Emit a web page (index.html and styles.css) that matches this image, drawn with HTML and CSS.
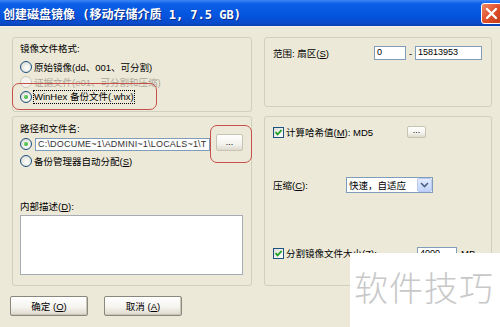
FILE: index.html
```html
<!DOCTYPE html>
<html lang="zh-CN">

<head>
    <meta charset="UTF-8">
    <meta name="viewport" content="width=device-width, initial-scale=1.0">
    <title>创建磁盘镜像</title>
    <link rel="stylesheet" href="styles.css">
</head>

<body>
    <div class="window">
        <!-- Title bar -->
        <div class="titlebar">
            <span class="title">创建磁盘镜像 (移动存储介质 1, 7.5 GB)</span>
            <span class="close-btn">
                <svg width="21" height="21" viewBox="0 0 21 21">
                    <path d="M6 6 L15 15 M15 6 L6 15" stroke="#fff" stroke-width="2.4" stroke-linecap="round" />
                </svg>
            </span>
        </div>

        <div class="dialog">
            <div class="columns">
                <!-- Left column -->
                <div class="col col-left">
                    <div class="group group-format">
                        <div class="label-row">镜像文件格式:</div>
                        <div class="opt-row"><span class="radio"></span><span>原始镜像(dd、001、可分割)</span></div>
                        <div class="opt-row disabled"><span class="radio"></span><span>证据文件(e01、可分割和压缩)</span></div>
                        <div class="opt-row"><span class="radio checked"></span><span class="focus">WinHex 备份文件(.whx)</span></div>
                    </div>

                    <div class="group group-path">
                        <div class="label-row">路径和文件名:</div>
                        <div class="path-row">
                            <span class="radio checked"></span>
                            <span class="field path-field">C:\DOCUME~1\ADMINI~1\LOCALS~1\T</span>
                            <span class="btn-small browse-btn">...</span>
                        </div>
                        <div class="opt-row auto-row"><span class="radio"></span><span>备份管理器自动分配(<u>S</u>)</span></div>
                        <div class="label-row desc-label">内部描述(<u>D</u>):</div>
                        <div class="desc-box"></div>
                    </div>
                </div>

                <!-- Right column -->
                <div class="col col-right">
                    <div class="group group-range">
                        <div class="range-row">
                            <span class="range-label">范围: 扇区(<u>S</u>)</span>
                            <span class="field range-start">0</span>
                            <span class="dash">-</span>
                            <span class="field range-end">15813953</span>
                        </div>
                    </div>

                    <div class="group group-options">
                        <div class="check-row hash-row">
                            <span class="checkbox">
                                <svg width="9" height="9" viewBox="0 0 9 9">
                                    <path d="M1.5 4.2 L3.6 6.4 L7.6 2" stroke="#21a121" stroke-width="1.8" fill="none" />
                                </svg>
                            </span>
                            <span class="hash-text">计算哈希值(<u>M</u>): MD5</span>
                            <span class="btn-small hash-btn">...</span>
                        </div>

                        <div class="compress-row">
                            <span class="compress-label">压缩(<u>C</u>):</span>
                            <span class="select">
                                <span class="select-text">快速，自适应</span>
                                <span class="select-arrow">
                                    <svg width="9" height="6" viewBox="0 0 9 6">
                                        <path d="M1 1 L4.5 4.5 L8 1" stroke="#4d6185" stroke-width="1.6" fill="none" />
                                    </svg>
                                </span>
                            </span>
                        </div>

                        <div class="check-row split-row">
                            <span class="checkbox">
                                <svg width="9" height="9" viewBox="0 0 9 9">
                                    <path d="M1.5 4.2 L3.6 6.4 L7.6 2" stroke="#21a121" stroke-width="1.8" fill="none" />
                                </svg>
                            </span>
                            <span class="split-text">分割镜像文件大小(<u>Z</u>):</span>
                            <span class="field split-field">4000</span>
                            <span class="unit">MB</span>
                        </div>
                    </div>
                </div>
            </div>

            <div class="actions">
                <span class="button">确定 (<u>O</u>)</span>
                <span class="button">取消 (<u>A</u>)</span>
            </div>
        </div>

        <!-- Red annotation marks -->
        <div class="mark mark-format"></div>
        <div class="mark mark-browse"></div>

        <!-- Watermark -->
        <div class="watermark">软件技巧</div>
    </div>
</body>

</html>
```

FILE: styles.css
```css
* {
    box-sizing: border-box;
}

body {
    margin: 0;
    background-color: #ece9d8;
    font-family: "Liberation Sans", "Noto Sans CJK SC", sans-serif;
    font-size: 9.5px;
    color: #000;
}

.window {
    position: relative;
    width: 500px;
    height: 327px;
    overflow: hidden;
    background-color: #ece9d8;
}

/* Title bar */
.titlebar {
    height: 27px;
    display: flex;
    align-items: center;
    justify-content: space-between;
    background: linear-gradient(#3d86f5, #0b5fe6 15%, #0554df 60%, #0a4ac9 90%, #0a3fb0);
    border-bottom: 1px solid #f4f2e8;
}

.title {
    padding-left: 3px;
    color: white;
    font-family: "DejaVu Sans Mono", "Noto Sans CJK SC", monospace;
    font-weight: bold;
    font-size: 12px;
    text-shadow: 1px 1px 0 #0a2f8a;
}

.close-btn {
    width: 21px;
    height: 21px;
    margin-right: -2px;
    border: 1px solid #fff;
    border-radius: 3px;
    background: linear-gradient(135deg, #f08a68, #e0502a 50%, #c23a16);
    display: flex;
    align-items: center;
    justify-content: center;
}

.close-btn svg {
    margin: -1px;
}

/* Dialog body */
.dialog {
    padding-top: 10px;
}

.columns {
    display: flex;
    gap: 12px;
    padding-left: 12px;
}

.col {
    display: flex;
    flex-direction: column;
}

.col-left {
    width: 240px;
    gap: 4px;
}

.col-right {
    width: 228px;
    gap: 9px;
}

.group {
    border: 1px solid #d0d0bf;
    border-radius: 3px;
    padding: 0 8px 0 7px;
}

.group-format {
    height: 75px;
    padding-top: 4px;
}

.group-path {
    height: 170px;
    padding-top: 5px;
}

.group-range {
    height: 70px;
    padding-top: 8px;
    padding-right: 9px;
    padding-left: 8px;
}

.group-options {
    height: 170px;
    padding-top: 8px;
    padding-left: 8px;
}

.label-row {
    height: 14px;
    line-height: 14px;
}

.group-format .label-row {
    margin-bottom: 3px;
}

.opt-row {
    height: 15px;
    display: flex;
    align-items: center;
    gap: 2px;
}

.opt-row.disabled {
    color: #aca899;
}

.focus {
    outline: 1px dotted #000;
    outline-offset: 0;
    line-height: 12px;
}

/* XP style radio */
.radio {
    width: 12px;
    height: 12px;
    flex: none;
    border: 1px solid #1c5180;
    border-radius: 50%;
    background: radial-gradient(circle at 60% 60%, #fff, #e6e6e0 60%, #d0d0c8);
    position: relative;
}

.radio.checked::after {
    content: "";
    position: absolute;
    left: 3px;
    top: 3px;
    width: 4px;
    height: 4px;
    border-radius: 50%;
    background: radial-gradient(circle at 40% 40%, #6dd46d, #21a121);
}

.disabled .radio {
    border-color: #cac8bb;
    background: #f4f3ee;
}

/* Path section */
.path-row {
    height: 17px;
    margin-top: -2px;
    display: flex;
    align-items: center;
}

.path-row .radio {
    margin-top: 3px;
}

.field {
    height: 13px;
    line-height: 11px;
    padding: 0 2px;
    border: 1px solid #7f9db9;
    background: white;
    font-size: 9px;
    white-space: nowrap;
    overflow: hidden;
}

.path-field {
    width: 175px;
    margin-left: 3px;
    margin-top: 3px;
    color: #333;
    letter-spacing: 0.2px;
}

.btn-small {
    display: flex;
    align-items: flex-end;
    justify-content: center;
    border: 1px solid #c8c4b4;
    border-radius: 2px;
    background: linear-gradient(#fff, #f4f3ee 60%, #dedbcd);
    font-size: 9px;
    line-height: 9px;
}

.browse-btn {
    width: 27px;
    height: 17px;
    margin-left: 6px;
    padding-bottom: 3px;
}

.auto-row {
    margin-top: 2px;
}

.desc-label {
    margin-top: 32px;
}

.desc-box {
    margin-top: 1px;
    width: 223px;
    height: 60px;
    background: white;
    border: 1px solid #a5acb5;
}

/* Range */
.range-row {
    height: 14px;
    display: flex;
    align-items: center;
}

.range-label {
    flex: 1;
}

.range-start {
    width: 32px;
    height: 14px;
}

.dash {
    width: 9px;
    text-align: center;
}

.range-end {
    width: 67px;
    height: 14px;
}

/* Options */
.check-row {
    height: 14px;
    display: flex;
    align-items: center;
}

.checkbox {
    width: 11px;
    height: 11px;
    flex: none;
    border: 1px solid #1c5180;
    background: linear-gradient(135deg, #dcdcd7, #fff);
    display: flex;
    align-items: center;
    justify-content: center;
    margin-right: 2px;
}

.hash-text {
    width: 121px;
}

.hash-btn {
    width: 19px;
    height: 12px;
    padding-bottom: 2px;
}

.compress-row {
    height: 16px;
    margin-top: 38px;
    display: flex;
    align-items: center;
}

.compress-label {
    width: 73px;
}

.select {
    width: 87px;
    height: 16px;
    border: 1px solid #7f9db9;
    background: white;
    display: flex;
    align-items: center;
    padding-left: 2px;
    font-family: "Noto Sans CJK SC", sans-serif;
}

.select-text {
    flex: 1;
}

.select-arrow {
    width: 15px;
    height: 14px;
    border: 1px solid #b9cbf3;
    border-radius: 2px;
    background: linear-gradient(#e3ecfd, #c1d3fb);
    display: flex;
    align-items: center;
    justify-content: center;
}

.split-row {
    margin-top: 53px;
}

.split-text {
    width: 131px;
}

.split-field {
    width: 40px;
    height: 13px;
}

.unit {
    margin-left: 4px;
}

/* Buttons */
.actions {
    display: flex;
    gap: 16px;
    padding-left: 10px;
    margin-top: 10px;
}

.button {
    width: 78px;
    height: 20px;
    display: flex;
    align-items: center;
    justify-content: center;
    border: 1px solid #8a877c;
    border-radius: 2px;
    background: linear-gradient(#fff, #f5f4ef 55%, #dcd8ca);
    box-shadow: inset -1px -1px 0 #cbc7b8;
}

/* Red annotation marks */
.mark {
    position: absolute;
    border: 1px solid #c8504a;
    border-radius: 7px;
}

.mark-format {
    left: 12px;
    top: 83px;
    width: 145px;
    height: 27px;
}

.mark-browse {
    left: 210px;
    top: 125px;
    width: 42px;
    height: 38px;
}

/* Watermark */
.watermark {
    position: absolute;
    left: 350px;
    top: 253px;
    width: 150px;
    height: 74px;
    background: white;
    padding: 17px 0 0 4px;
    font-family: "Noto Sans CJK SC", sans-serif;
    font-weight: 300;
    font-size: 34px;
    line-height: 34px;
    color: #c8c8c8;
    letter-spacing: 1px;
}
```
